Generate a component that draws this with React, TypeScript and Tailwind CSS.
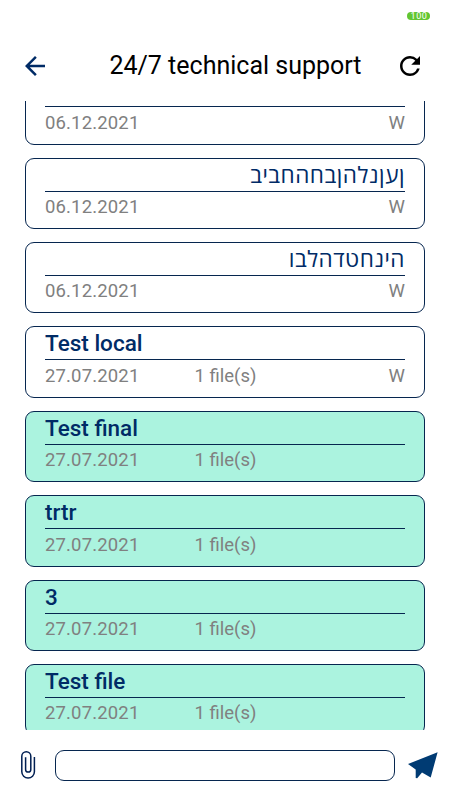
import { MdArrowBack, MdRefresh } from "react-icons/md";

type Ticket = {
  id: number;
  title: string;
  date: string;
  files?: string;
  status?: string;
  open?: boolean;
  rtl?: boolean;
};

const tickets: Ticket[] = [
  { id: 1, title: "", date: "06.12.2021", status: "W" },
  { id: 2, title: "ןעןנלהןבחהחביב", date: "06.12.2021", status: "W", rtl: true },
  { id: 3, title: "הינחטדהלבו", date: "06.12.2021", status: "W", rtl: true },
  { id: 4, title: "Test local", date: "27.07.2021", files: "1 file(s)", status: "W" },
  { id: 5, title: "Test final", date: "27.07.2021", files: "1 file(s)", open: true },
  { id: 6, title: "trtr", date: "27.07.2021", files: "1 file(s)", open: true },
  { id: 7, title: "3", date: "27.07.2021", files: "1 file(s)", open: true },
  { id: 8, title: "Test file", date: "27.07.2021", files: "1 file(s)", open: true },
];

function StatusBar() {
  return (
    <div className="flex h-[31px] shrink-0 justify-end pr-5 pt-3">
      <span className="flex h-[8px] w-[23px] items-center justify-center rounded-full bg-[#62c632] pl-px text-[9px] leading-none tracking-[0.6px] text-white">
        100
      </span>
    </div>
  );
}

function TicketCard({ ticket }: { ticket: Ticket }) {
  return (
    <article
      className={`h-[71.4px] shrink-0 rounded-[9px] border border-[#06264f] px-[19px] ${
        ticket.open ? "bg-[#abf3df]" : "bg-white"
      }`}
    >
      <h2
        dir={ticket.rtl ? "rtl" : "ltr"}
        className={`h-[33px] border-b border-[#06264f] text-[#002b66] ${
          ticket.rtl
            ? "font-['Open_Sans','Noto_Sans',sans-serif] text-[22.5px] leading-[32px] tracking-[0.5px]"
            : "text-[22.5px] font-medium leading-[33.2px]"
        }`}
      >
        {ticket.title}
      </h2>
      <div className="flex pt-[4.4px] text-[18.5px] leading-[22px] text-[#808080]">
        <span className="w-[149.5px] tracking-[0.15px]">{ticket.date}</span>
        <span>{ticket.files}</span>
        <span className="ml-auto">{ticket.status}</span>
      </div>
    </article>
  );
}

export default function App() {
  return (
    <main className="flex h-[800px] w-[450px] flex-col overflow-hidden bg-white font-[Roboto,sans-serif]">
      <StatusBar />
      <header className="flex h-[70px] shrink-0 items-center pl-[20px] pr-[25px]">
        <button type="button" aria-label="Back" className="text-[#002b66]">
          <MdArrowBack className="size-[30px]" />
        </button>
        <h1 className="flex-1 pl-[26px] text-center text-[25px] leading-[30px] text-black">
          24/7 technical support
        </h1>
        <button type="button" aria-label="Refresh" className="text-black">
          <MdRefresh className="size-[30px]" />
        </button>
      </header>

      <section className="h-[629px] shrink-0 overflow-hidden px-[25px]">
        <div className="-mt-[27.7px] flex flex-col gap-[13px]">
          {tickets.map((ticket) => (
            <TicketCard key={ticket.id} ticket={ticket} />
          ))}
        </div>
      </section>

      <footer className="flex h-[70px] shrink-0 items-center pl-[20px] pr-[12px]">
        <button type="button" aria-label="Attach file" className="text-[#001f52]">
          <svg
            viewBox="0 0 16 30"
            className="h-[30px] w-[16px]"
            fill="none"
            stroke="currentColor"
            strokeWidth="1.5"
          >
            <path d="M14.400 7v14.800a6.300 6.300 0 0 1-12.600 0V6.300a4.500 4.500 0 0 1 9 0v13.200a2.600 2.600 0 0 1-5.200 0V7.200" />
          </svg>
        </button>
        <input
          aria-label="Message"
          className="ml-[19px] h-[31px] w-[340px] rounded-[9px] border border-[#06264f] px-3 outline-none"
        />
        <button type="button" aria-label="Send" className="ml-auto text-[#003b73]">
          <svg viewBox="0 0 30 27" className="h-[27px] w-[30px]" fill="currentColor">
            <path d="M0 12 29.600.3 22.700 25.500 14 20.500 9.200 26.300 7.700 26V17.400Z" />
          </svg>
        </button>
      </footer>
    </main>
  );
}
